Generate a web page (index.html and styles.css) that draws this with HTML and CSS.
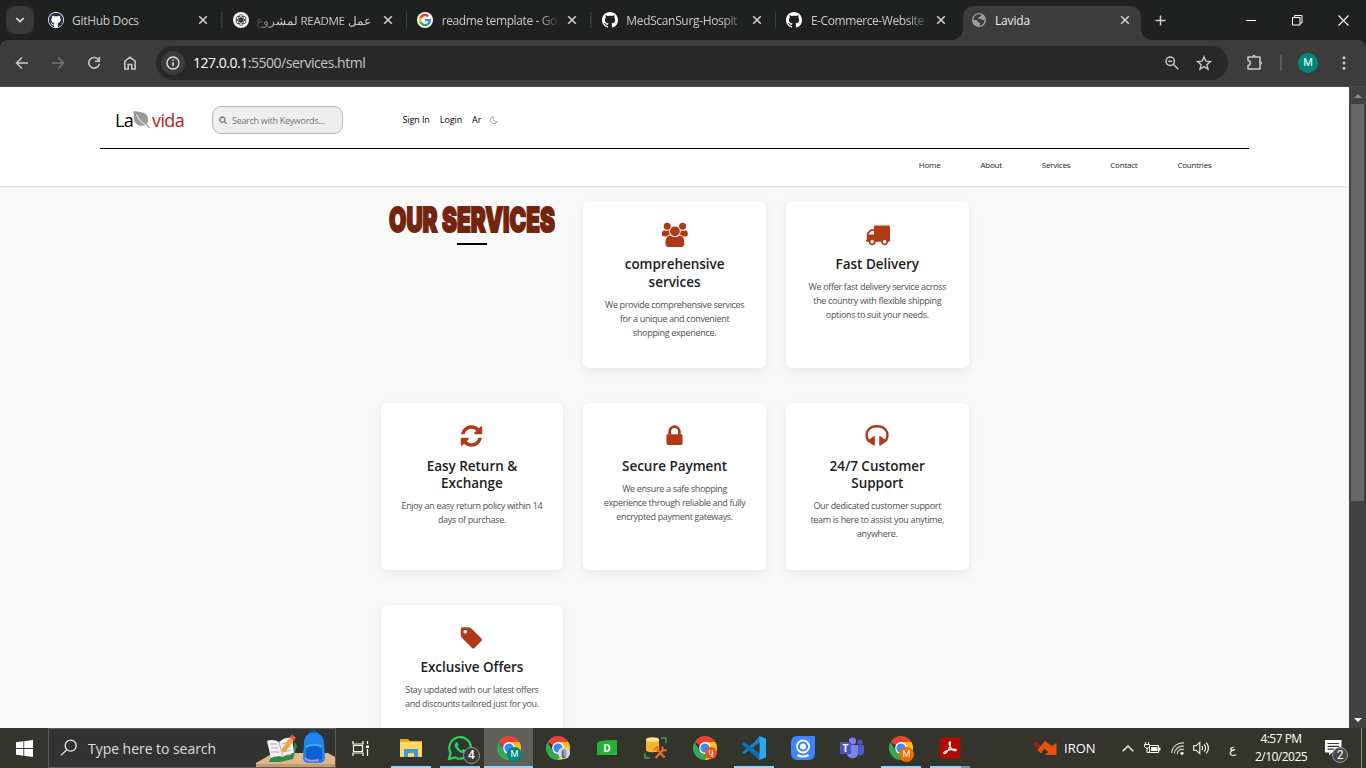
FILE: index.html
```html
<!DOCTYPE html>
<html lang="en">
<head>
<meta charset="utf-8">
<title>Lavida</title>
<link rel="stylesheet" href="styles.css">
</head>
<body>
<svg class="defs" aria-hidden="true">
  <symbol id="x" viewBox="0 0 10 10"><path d="M1.2 1.2l7.6 7.6M8.8 1.2L1.2 8.8" fill="none" stroke="currentColor" stroke-width="1.6"/></symbol>
  <symbol id="github" viewBox="0 0 16 16"><path fill="currentColor" d="M8 0C3.58 0 0 3.58 0 8c0 3.54 2.29 6.53 5.47 7.59.4.07.55-.17.55-.38 0-.19-.01-.82-.01-1.49-2.01.37-2.53-.49-2.69-.94-.09-.23-.48-.94-.82-1.13-.28-.15-.68-.52-.01-.53.63-.01 1.08.58 1.23.82.72 1.21 1.87.87 2.33.66.07-.52.28-.87.51-1.07-1.78-.2-3.64-.89-3.64-3.95 0-.87.31-1.59.82-2.15-.08-.2-.36-1.02.08-2.12 0 0 .67-.21 2.2.82.64-.18 1.32-.27 2-.27s1.36.09 2 .27c1.53-1.04 2.2-.82 2.2-.82.44 1.1.16 1.92.08 2.12.51.56.82 1.27.82 2.15 0 3.07-1.87 3.75-3.65 3.95.29.25.54.73.54 1.48 0 1.07-.01 1.93-.01 2.2 0 .21.15.46.55.38A8.01 8.01 0 0 0 16 8c0-4.42-3.58-8-8-8z"/></symbol>
  <symbol id="chrome" viewBox="0 0 24 24"><path fill="#ea4335" d="M12 12L1.6 6A12 12 0 0 1 22.4 6z"/><path fill="#fbc116" d="M12 12L12 6H22.4A12 12 0 0 1 12 24z"/><path fill="#34a853" d="M12 24A12 12 0 0 1 1.6 6L6.8 15 12 12l5.2 3z"/><circle cx="12" cy="12" r="5.9" fill="#fff"/><circle cx="12" cy="12" r="4.6" fill="#4285f4"/></symbol>
</svg>

<div class="tabstrip">
  <div class="tab-search"><svg width="10" height="6" viewBox="0 0 10 6"><path d="M1.3 1l3.7 3.6L8.700 1" fill="none" stroke="#e8e8e8" stroke-width="1.7"/></svg></div>
  <div class="tab"><span class="fav fav-docs"><svg width="16" height="16"><use href="#github"/></svg></span><span class="tab-title t1">GitHub Docs</span><svg class="close"><use href="#x"/></svg></div>
  <div class="tab"><svg class="fav" viewBox="0 0 16 16"><circle cx="8" cy="8" r="8" fill="#f4f4f4"/><g fill="none" stroke="#222" stroke-width=".7"><ellipse cx="8" cy="5.800" rx="2.300" ry="3.200"/><ellipse cx="8" cy="5.800" rx="2.300" ry="3.200" transform="rotate(60 8 8)"/><ellipse cx="8" cy="5.800" rx="2.300" ry="3.200" transform="rotate(120 8 8)"/><ellipse cx="8" cy="5.800" rx="2.300" ry="3.200" transform="rotate(180 8 8)"/><ellipse cx="8" cy="5.800" rx="2.300" ry="3.200" transform="rotate(240 8 8)"/><ellipse cx="8" cy="5.800" rx="2.300" ry="3.200" transform="rotate(300 8 8)"/></g></svg><span class="tab-title rtl" dir="rtl">عمل README لمشروع</span><svg class="close"><use href="#x"/></svg></div>
  <div class="tab"><svg class="fav" viewBox="0 0 64 64"><circle cx="32" cy="32" r="32" fill="#fff"/><g transform="translate(7 7) scale(1.04)"><path fill="#EA4335" d="M24 9.500c3.540 0 6.710 1.220 9.210 3.600l6.850-6.850C35.900 2.380 30.470 0 24 0 14.620 0 6.510 5.380 2.560 13.220l7.980 6.190C12.430 13.720 17.740 9.500 24 9.500z"/><path fill="#4285F4" d="M46.980 24.550c0-1.570-.15-3.090-.38-4.550H24v9.020h12.940c-.58 2.960-2.260 5.480-4.780 7.180l7.730 6c4.510-4.180 7.090-10.360 7.090-17.650z"/><path fill="#FBBC05" d="M10.530 28.590c-.48-1.450-.76-2.990-.76-4.590s.27-3.140.76-4.590l-7.980-6.190C.92 16.460 0 20.120 0 24s.92 7.540 2.560 10.780l7.970-6.190z"/><path fill="#34A853" d="M24 48c6.480 0 11.930-2.130 15.890-5.810l-7.730-6c-2.150 1.450-4.920 2.300-8.160 2.300-6.260 0-11.570-4.220-13.470-9.910l-7.980 6.190C6.510 42.620 14.620 48 24 48z"/></g></svg><span class="tab-title fade t3">readme template - Go</span><svg class="close"><use href="#x"/></svg></div>
  <div class="tab"><svg class="fav gh"><use href="#github"/></svg><span class="tab-title fade t4">MedScanSurg-Hospit</span><svg class="close"><use href="#x"/></svg></div>
  <div class="tab last"><svg class="fav gh"><use href="#github"/></svg><span class="tab-title fade t5">E-Commerce-Website</span><svg class="close"><use href="#x"/></svg></div>
  <div class="tab active"><svg class="fav globe" viewBox="0 0 14 14"><circle cx="7" cy="7" r="7" fill="#9aa0a6"/><path d="M5 1.600c1.800-.6 3.600-.3 5 .6-.6.500-1.100.4-1.600.8-.2 1.300-1 1.200-1.800 1.300-.2.900.4 1.300 1.400 1.200 1 .2 1.200.9 2 1.200 1.100.2 1.900-.1 2.500-.5.300 3.300-2 6-5 6.400.1-1 .9-1.300.8-2.200-.5-.9-1.300-.5-2-1C5.400 8.300 5.200 7.300 4 7H1.400C1.500 4.500 3 2.500 5 1.600z" fill="#3c3c3c"/><path d="M6.300 4.300c1 .4 2.400-.6 3.400.4.500.8 1.600.4 2.300 1-.8 1-2 1-2.800.4-.8-.8-2.300 0-2.900-.8zM1.600 7.200h2.200c1.400.4 1.600 1.700 2.700 2 .8.400.6 1.500-.2 2.900-2.800-.3-4.600-2.400-4.700-4.900z" fill="#9aa0a6"/></svg><span class="tab-title">Lavida</span><svg class="close"><use href="#x"/></svg></div>
  <svg class="newtab" viewBox="0 0 11 11"><path d="M5.500 .5v10M.5 5.500h10" stroke="#ccc" stroke-width="1.500"/></svg>
  <div class="winctl">
    <svg width="11" height="11"><path d="M0 5.500h10" stroke="#fff"/></svg>
    <svg width="11" height="11"><path d="M.5 2.500h7.500v7.500H.5zM2.500 2.500v-2h7.500v7.500h-2" fill="none" stroke="#fff"/></svg>
    <svg width="11" height="11"><path d="M.5 .5l10 10M10.500 .5l-10 10" stroke="#fff" stroke-width="1.100"/></svg>
  </div>
</div>

<div class="toolbar">
  <svg class="nav" viewBox="0 0 16 16"><path d="M14 8H3M8 2.500L2.500 8 8 13.500" fill="none" stroke="#c7c7c7" stroke-width="1.500"/></svg>
  <svg class="nav" viewBox="0 0 16 16"><path d="M2 8h11M8 2.500L13.500 8 8 13.500" fill="none" stroke="#757575" stroke-width="1.500"/></svg>
  <svg class="nav" viewBox="0 0 16 16"><path d="M12.700 5.200A5.300 5.300 0 1 0 13.300 8.800M13.300 2v4.300H9" fill="none" stroke="#c7c7c7" stroke-width="1.600"/></svg>
  <svg class="nav" viewBox="0 0 16 16"><path d="M2.800 14V6.200L8 2.200l5.200 4V14H9.800V9.500H6.200V14z" fill="none" stroke="#c7c7c7" stroke-width="1.600"/></svg>
  <div class="omnibox">
    <span class="info"><svg width="14" height="14" viewBox="0 0 14 14"><circle cx="7" cy="7" r="6" fill="none" stroke="#ddd" stroke-width="1.400"/><path d="M7 6.200v4M7 3.500v1.500" stroke="#ddd" stroke-width="1.500"/></svg></span>
    <span class="url"><b>127.0.0.1</b>:5500/services.html</span>
    <svg class="zoom" viewBox="0 0 14 14"><circle cx="5.200" cy="5.200" r="4.200" fill="none" stroke="#c7c7c7" stroke-width="1.500"/><path d="M3.300 5.200h3.800M8.300 8.300l5 5" stroke="#c7c7c7" stroke-width="1.500"/></svg>
    <svg class="star" viewBox="0 0 16 16"><path d="M8 1.800l1.800 4.400 4.700.4-3.600 3 1.100 4.600L8 11.700l-4 2.500 1.100-4.600-3.600-3 4.700-.4z" fill="none" stroke="#c7c7c7" stroke-width="1.400"/></svg>
  </div>
  <svg class="ext" viewBox="0 0 17 17"><path d="M2 3H14V15H2V11.500C5 11.300 5 6.700 2 6.500z" fill="none" stroke="#c7c7c7" stroke-width="1.600" stroke-linejoin="round"/><path d="M6 2.800c0-2.400 4-2.400 4 0zM14.300 7c2.300 0 2.300 4 0 4z" fill="#c7c7c7"/></svg>
  <span class="tb-sep"></span>
  <span class="avatar">M</span>
  <svg class="dots" viewBox="0 0 4 14"><g fill="#c7c7c7"><circle cx="2" cy="1.700" r="1.500"/><circle cx="2" cy="7" r="1.500"/><circle cx="2" cy="12.300" r="1.500"/></g></svg>
</div>

<div class="viewport">
  <div class="page">
    <header class="site-header">
      <div class="header-inner">
        <div class="top-row">
          <div class="logo"><span class="la">La</span><svg class="leaf" viewBox="0 0 20 20"><path d="M1 .8C7 1 17 1.500 16.800 9c0 2.700-.5 4.500-1.100 5.500L18.800 18.200l-.8.700-3.500-3.600C9 17.500 2 15 1.800 7.500 1.700 4.500 2.500 3 1 .8z" fill="#9a9898"/><path d="M5 4.500c1 4 4.500 8 9.500 10.300" fill="none" stroke="#fff" stroke-width="1"/></svg><span class="vida">vida</span></div>
          <div class="search"><svg width="8" height="8" viewBox="0 0 1792 1792"><path fill="#777" stroke="#777" stroke-width="60" d="M1216 832q0-185-131.500-316.500t-316.500-131.500-316.500 131.500-131.500 316.500 131.500 316.500 316.500 131.500 316.500-131.500 131.500-316.500zm512 832q0 52-38 90t-90 38q-54 0-90-38l-343-342q-179 124-399 124-143 0-273.500-55.500t-225-150-150-225-55.500-273.500 55.500-273.500 150-225 225-150 273.500-55.500 273.500 55.500 225 150 150 225 55.500 273.500q0 220-124 399l343 343q37 37 37 90z"/></svg><span>Search with Keywords...</span></div>
          <div class="account"><span class="signin">Sign In</span><span class="login">Login</span><span class="ar">Ar</span><svg width="8" height="8" viewBox="0 0 8 8"><path d="M3.300.5C1.500 1.200.5 2.500.5 4.200c0 2 1.500 3.300 3.400 3.300 1.600 0 2.800-.8 3.400-2C4.500 6 2.300 4 3.300.5z" fill="none" stroke="#999" stroke-width=".9"/></svg></div>
        </div>
        <nav class="menu"><span class="m1">Home</span><span class="m2">About</span><span class="m3">Services</span><span class="m4">Contact</span><span class="m5">Countries</span></nav>
      </div>
    </header>
    <main class="services">
      <div class="heading"><svg width="170" height="30"><text x="2" y="27" textLength="166" lengthAdjust="spacingAndGlyphs">OUR SERVICES</text></svg><span class="bar"></span></div>
      <article class="card"><svg class="ico" width="28" height="26" viewBox="0 0 28 26"><g fill="#b03a16"><circle cx="6.200" cy="4.300" r="3.500"/><circle cx="21.600" cy="4.300" r="3.500"/><path d="M8.200 8.200c-1.900 1-3.800.7-5.200 0C1.300 8.400 1 10.800 1 12.300c0 1.600 1 2.200 2.400 2.200h2.400c.8-1.100 1.900-1.800 3.300-2-.8-1.400-1.100-2.700-.9-4.300zM19.600 8.200c1.900 1 3.800.7 5.200 0 1.700.2 2 2.600 2 4.100 0 1.600-1 2.200-2.400 2.200H22c-.8-1.100-1.900-1.800-3.300-2 .8-1.400 1.100-2.700.9-4.300z"/><circle cx="13.900" cy="9.300" r="4.900"/><path d="M9.300 13.600c2.900 2.300 6.300 2.300 9.200 0 4 0 4.900 4.400 4.900 7.800 0 2.500-1.500 3.600-3.600 3.600H8c-2.100 0-3.600-1.100-3.600-3.600 0-3.400.9-7.800 4.900-7.800z"/></g></svg><h2>comprehensive<br>services</h2><p>We provide comprehensive services<br>for a unique and convenient<br>shopping experience.</p></article>
      <article class="card"><svg class="ico truck" width="25" height="25" viewBox="0 0 1792 1792"><path fill="#b03a16" d="M640 1408q0-52-38-90t-90-38-90 38-38 90 38 90 90 38 90-38 38-90zm-384-512h384v-256h-158q-13 0-22 9l-195 195q-9 9-9 22v30zm1280 512q0-52-38-90t-90-38-90 38-38 90 38 90 90 38 90-38 38-90zm256-1088v1024q0 15-4 26.500t-13.500 18.500-16.500 11.500-23.500 6-22.500 2-25.500 0-22.500-.5q0 106-75 181t-181 75-181-75-75-181h-384q0 106-75 181t-181 75-181-75-75-181h-64q-3 0-22.500.5t-25.500 0-22.500-2-23.500-6-16.500-11.500-13.500-18.500-4-26.500q0-26 19-45t45-19v-320q0-8-.5-35t0-38 2.500-34.500 6.500-37 14-30.500 22.500-30l198-198q19-19 50.500-32t58.500-13h160v-192q0-26 19-45t45-19h1024q26 0 45 19t19 45z"/></svg><h2>Fast Delivery</h2><p>We offer fast delivery service across<br>the country with flexible shipping<br>options to suit your needs.</p></article>
      <article class="card"><svg class="ico" width="25" height="25" viewBox="0 0 1792 1792"><path fill="#b03a16" d="M1639 1056q0 5-1 7-64 268-268 434.500t-478 166.500q-146 0-282.500-55t-243.500-157l-129 129q-19 19-45 19t-45-19-19-45v-448q0-26 19-45t45-19h448q26 0 45 19t19 45-19 45l-137 137q71 66 161 102t187 36q134 0 250-65t186-179q11-17 53-117 8-23 30-23h192q13 0 22.500 9.500t9.500 22.500zm25-800v448q0 26-19 45t-45 19h-448q-26 0-45-19t-19-45 19-45l138-138q-148-137-349-137-134 0-250 65t-186 179q-11 17-53 117-8 23-30 23h-199q-13 0-22.500-9.500t-9.500-22.500v-7q65-268 270-434.500t480-166.500q146 0 284 55.500t245 156.500l130-129q19-19 45-19t45 19 19 45z"/></svg><h2>Easy Return &amp;<br>Exchange</h2><p>Enjoy an easy return policy within 14<br>days of purchase.</p></article>
      <article class="card"><svg class="ico lock" width="25" height="25" viewBox="0 0 1792 1792"><path fill="#b03a16" d="M640 768h512v-192q0-106-75-181t-181-75-181 75-75 181v192zm832 96v576q0 40-28 68t-68 28h-960q-40 0-68-28t-28-68v-576q0-40 28-68t68-28h32v-192q0-184 132-316t316-132 316 132 132 316v192h32q40 0 68 28t28 68z"/></svg><h2>Secure Payment</h2><p>We ensure a safe shopping<br>experience through reliable and fully<br>encrypted payment gateways.</p></article>
      <article class="card"><svg class="ico" width="24" height="26" viewBox="0 0 24 26"><path d="M3 17.500C-1.200 9 4.500 3.200 12 3.200S25.200 9 21 17.500" fill="none" stroke="#b03a16" stroke-width="2.400"/><path d="M9.800 13.200v9.200h-1.300L4.800 20 1.600 18l2.300-1.700c1.500-.2 2-.6 2.600-1.500L8.500 13.200zM14.200 13.200v9.200h1.300l3.700-2.400 3.200-2-2.300-1.700c-1.500-.2-2-.6-2.600-1.500L15.500 13.200z" fill="#b03a16"/></svg><h2>24/7 Customer<br>Support</h2><p>Our dedicated customer support<br>team is here to assist you anytime,<br>anywhere.</p></article>
      <article class="card"><svg class="ico" width="25" height="25" viewBox="0 0 1792 1792"><path fill="#b03a16" d="M576 448q0-53-37.500-90.500t-90.500-37.500-90.500 37.500-37.500 90.500 37.500 90.500 90.500 37.500 90.500-37.500 37.500-90.500zm1067 576q0 53-37 90l-491 492q-39 37-91 37-53 0-90-37l-715-716q-38-37-64.500-101t-26.500-117v-416q0-52 38-90t90-38h416q53 0 117 26.500t102 64.500l715 714q37 39 37 91z"/></svg><h2>Exclusive Offers</h2><p>Stay updated with our latest offers<br>and discounts tailored just for you.</p></article>
    </main>
  </div>
  <div class="scrollbar"><svg viewBox="0 0 8 4"><path d="M0 4l4-4 4 4z" fill="#8b8b8b"/></svg><span class="thumb"></span><svg class="down" viewBox="0 0 8 4"><path d="M0 0l4 4 4-4z" fill="#fff"/></svg></div>
</div>

<footer class="taskbar">
  <div class="start"><svg width="17" height="17" viewBox="0 0 17 17"><path fill="#fff" d="M0 2.300L7.400 1.300V8.100H0zM8.200 1.200L17 0V8.100H8.200zM0 8.900h7.400v6.800L0 14.700zM8.200 8.900H17V17l-8.800-1.200z"/></svg></div>
  <div class="tb-search">
    <svg width="18" height="18" viewBox="0 0 18 18"><circle cx="10.700" cy="6.700" r="5.500" fill="none" stroke="#eee" stroke-width="1.300"/><path d="M6.800 10.600L1 16.400" stroke="#eee" stroke-width="1.300"/></svg>
    <span>Type here to search</span>
    <svg class="art" width="80" height="38" viewBox="0 0 80 38"><path d="M1 34L18 24H73L80 28v10H1z" fill="#dfb98c"/><path d="M1 35h79v3H1z" fill="#c79a6b"/><path d="M14 33l2-5 20-2 4-13 2 4-4 13-13 3z" fill="#2c8a4b"/><path d="M12 12c4-2 9-1 12 1 4-4 9-5 13-4l2 15c-4 0-8 1-11 4-4-2-8-1-12 1z" fill="#f4f2f8"/><path d="M24 13l4 15M15 15l7 0M16 19l7 0M16 23l8 0M27 15l8-2M28 19l8-2M29 23l7-2" stroke="#b0a8c0" stroke-width="1" fill="none"/><path d="M27 20l8-12 4 3-8 11-5 2z" fill="#f3a33c"/><path d="M35 8l2-2.500 4 3-2 3z" fill="#e5525c"/><path d="M54 6c0-5 9-5 9 0" fill="none" stroke="#1454b5" stroke-width="2"/><path d="M49 14c0-14 20-14 20 0l1 14c0 6-3 6-11 6s-11 0-11-6z" fill="#1c85f2"/><path d="M51 20c3-4 13-4 16 0v10c0 3-16 3-16 0z" fill="#0c5fcc"/><path d="M51 18c3-3 13-3 16 0" fill="none" stroke="#4ea6ff" stroke-width="1.500"/><path d="M50 29c3 4 9 3 14 2" fill="none" stroke="#c58cf5" stroke-width="1.800"/></svg>
  </div>
  <div class="slot view"><svg width="18" height="17" viewBox="0 0 18 17"><path d="M1 1v3h10V1M1 16v-3h10v3M1.500 5.500h9v6h-9zM15.500 1v3M15.500 9v7" fill="none" stroke="#fff" stroke-width="1.200"/><path d="M14 5.500h3v2.500h-3z" fill="#fff"/></svg></div>
  <div class="slot open"><svg width="22" height="20" viewBox="0 0 22 20"><path d="M0 1h8l2 2h12v15H0z" fill="#e8a317"/><path d="M0 4h22v15H0z" fill="#ffd867"/><path d="M4 11h14v8h-4v-4H8v4H4z" fill="#3e9be0"/></svg></div>
  <div class="slot open"><svg width="26" height="26" viewBox="0 0 26 26"><path d="M2 24l1.600-6A10.800 10.800 0 1 1 8 22.400z" fill="none" stroke="#25d366" stroke-width="2.200"/><path d="M8.500 8c1-1.500 2-1 2.300 0l.8 2-1 1.400c1 2 2.300 3.200 4.200 4l1.500-1.500 2.500 1.300c.3 2-2 3-3.600 2.700-4-1-8-5.500-7.500-8z" fill="#25d366"/></svg><span class="badge b4">4</span></div>
  <div class="slot focus"><svg width="24" height="24"><use href="#chrome"/></svg><span class="badge bm">M</span></div>
  <div class="slot"><svg width="24" height="24"><use href="#chrome"/></svg><span class="badge bp"><svg width="12" height="12"><path d="M4 2l4 0 1 4-1 5-4 0-1-4z" fill="#9aa7ae"/><path d="M4 3l2 2-1 3 3 3H4z" fill="#5d6a70"/></svg></span></div>
  <div class="slot"><svg width="20" height="16" viewBox="0 0 20 16"><path d="M3 1l17-1v15H3z" fill="#29c440"/><path d="M0 3l3-2 17-1v11l-4 4H0z" fill="#24b238"/><text x="10" y="12" class="dl">D</text></svg></div>
  <div class="slot"><svg width="24" height="24" viewBox="0 0 24 24"><path d="M17 2h5v5M1 17v5h5" fill="none" stroke="#43a047" stroke-width="1.500"/><path d="M2 3v11c0 3 13 3 13 0V3z" fill="#f4b62d"/><ellipse cx="8.500" cy="3.500" rx="6.500" ry="2.300" fill="#ffe494"/><path d="M11.500 22l8-8.500M13 13l7.500 8.500" stroke="#e8731a" stroke-width="2.200"/><path d="M9.500 14.500l3.500-3.500 2.500 2M18 10.500l1 3.500 3.500.5" stroke="#e8731a" stroke-width="2" fill="none"/></svg></div>
  <div class="slot"><svg width="24" height="24"><use href="#chrome"/></svg><span class="badge br">ų</span></div>
  <div class="slot open"><svg width="24" height="24" viewBox="0 0 24 24"><path d="M17.500 0L24 2.800v18.400L17.500 24 7 14.300 2.200 18 0 16.800 13.500 5z" fill="#1686d0"/><path d="M0 7.200L2.200 6 17.500 18V24L0 8.500z" fill="#0b6fb8"/><path d="M17.500 0L24 2.800v18.400L17.500 24z" fill="#2ba8f2"/><path d="M17.500 6.500v11L10.300 12z" fill="#33342b"/></svg></div>
  <div class="slot"><svg width="24" height="24" viewBox="0 0 24 24"><path d="M6 0h18v18a6 6 0 0 1-6 6H6a6 6 0 0 1-6-6V6a6 6 0 0 1 6-6z" fill="#3f83fa"/><circle cx="12" cy="10.500" r="6" fill="none" stroke="#fff" stroke-width="1.800"/><circle cx="12" cy="10.500" r="3" fill="#fff"/><path d="M6.500 19c3 2 8 2 11 0" stroke="#fff" stroke-width="2.200" fill="none"/></svg></div>
  <div class="slot"><svg width="24" height="22" viewBox="0 0 24 22"><circle cx="12.500" cy="4" r="3.600" fill="#7b83eb"/><circle cx="20" cy="5" r="2.600" fill="#5059c9"/><path d="M16 8h8v7c0 3-3 4-6 3z" fill="#5059c9"/><path d="M7 8h11v8c0 7-11 7-11 0z" fill="#7b83eb"/><path d="M0 5h11v12H0z" fill="#4b53bc"/><text x="5.500" y="14.500" class="dl">T</text></svg></div>
  <div class="slot open"><svg width="24" height="24"><use href="#chrome"/></svg><span class="badge bo">M</span></div>
  <div class="slot open pdf"><svg width="22" height="22" viewBox="0 0 22 22"><rect x=".5" y=".5" width="21" height="21" rx="3" fill="#b30b00"/><path d="M5 16.500c-1.500-1.500 5-4 10-4.300 4 0 2 2.800-1 .8C11.500 11.500 9.500 8 10.200 5.500c1.300-2.300 1.800 1.500.3 5C9 14 6.500 17.500 5 16.500z" fill="none" stroke="#fff" stroke-width="1.200"/></svg></div>
  <div class="tray">
    <svg class="iron" width="24" height="14" viewBox="0 0 24 14"><path d="M0 3L3.500 0 8 5 4.500 9z" fill="#8e2416"/><path d="M4.500 9L12 0l7 5 4.500-3v12H12l3-3-3.500-3.500L8 12.500z" fill="#e8520c"/></svg>
    <span class="irontext">IRON</span>
    <svg class="chev" width="12" height="7" viewBox="0 0 12 7"><path d="M.7 6.300L6 1l5.300 5.300" fill="none" stroke="#fff" stroke-width="1.300"/></svg>
    <svg class="bat" width="17" height="13" viewBox="0 0 17 13"><path d="M5.500 3.500h9v7h-9zM1.500 0v2.500M4.500 0v2.500M.5 2.500h5v2L3 6.500.5 4.500zM3 6v4.500h2.500" fill="none" stroke="#fff"/><path d="M7 5h6.500v4H7zM15 5.500h1.500v3H15z" fill="#fff"/></svg>
    <svg class="wifi" width="14" height="13" viewBox="0 0 14 13"><g fill="none" stroke="#ddd" stroke-width="1.100"><path d="M.6 11A11 11 0 0 1 13 1"/><path d="M3.400 11.500A8 8 0 0 1 13 4.300"/><path d="M6.200 12A5 5 0 0 1 13 7.500"/></g><circle cx="11" cy="11.300" r="1.600" fill="#fff"/></svg>
    <svg class="vol" width="17" height="14" viewBox="0 0 17 14"><g fill="none" stroke="#fff" stroke-width="1.100"><path d="M.6 4.800h2.600L6.800 1.300v11.400L3.200 9.200H.6zM8.800 5c1 1.200 1 2.800 0 4M11 3.300c2 2.200 2 5.200 0 7.400M13.200 1.600c3 3 3 7.800 0 10.800"/></g></svg>
    <span class="lang">ع</span>
    <span class="clock"><span class="time">4:57 PM</span><span class="date">2/10/2025</span></span>
    <span class="note"><svg width="17" height="16" viewBox="0 0 17 16"><path d="M0 0h16.500v12.500H7L4 15.500v-3H0z" fill="#fff"/><path d="M2.500 3.500H14M2.500 6.300H14M2.500 9.100H9" stroke="#34352b" stroke-width="1.200"/></svg><span class="badge b2">2</span></span>
    <span class="desk"></span>
  </div>
</footer>
</body>
</html>
```
FILE: styles.css
```css
* { box-sizing: border-box; }
body { margin: 0; width: 1366px; height: 768px; overflow: hidden; display: flex; flex-direction: column; font-family: "Open Sans", "Noto Sans", sans-serif; background: #1f2120; white-space: nowrap; }
svg { display: block; flex: none; }
.defs { position: absolute; width: 0; height: 0; }

/* browser tabs */
.tabstrip { height: 40px; flex: none; display: flex; align-items: center; background: #1f2120; }
.tab-search { width: 28px; height: 28px; margin: 0 4px 0 6px; border-radius: 9px; background: #3a3a3a; display: flex; align-items: center; justify-content: center; }
.tab { width: 184.6px; height: 40px; flex: none; display: flex; align-items: center; padding: 0 14.5px 0 10px; background: linear-gradient(#3f4140, #3f4140) 100% 50% / 1.5px 16px no-repeat; }
.tab.last { background: none; }
.fav { width: 16px; height: 16px; flex: none; margin-right: 8px; }
.fav-docs { border-radius: 50%; background: #fff; color: #24304a; }
.fav-docs svg { transform: scale(.92); }
.gh { color: #fff; }
.tab-title { width: 116px; padding-top: 1px; font-size: 12px; line-height: 20px; color: #c9cac9; letter-spacing: -.3px; }
.tab-title.rtl { width: 114px; font-size: 11.5px; letter-spacing: -.3px; }
.t3, .t4, .t5 { padding-left: .5px; }
.t3 { letter-spacing: -.38px; }
.t4 { letter-spacing: -.34px; }
.t5 { letter-spacing: -.42px; }
.fade { -webkit-mask-image: linear-gradient(90deg, #000 84%, rgba(0,0,0,.15) 100%); mask-image: linear-gradient(90deg, #000 84%, rgba(0,0,0,.15) 100%); }
.rtl { -webkit-mask-image: linear-gradient(270deg, #000 82%, rgba(0,0,0,.2) 100%); mask-image: linear-gradient(270deg, #000 82%, rgba(0,0,0,.2) 100%); }
.close { width: 10px; height: 10px; margin-left: auto; color: #d0d0d0; }
.active { position: relative; width: 178px; height: 34px; align-self: flex-end; background: #3c3c3c; border-radius: 10px 10px 0 0; padding: 0 11px 6px 9px; margin-left: 2px; }
.active::before, .active::after { content: ""; position: absolute; bottom: 0; width: 10px; height: 10px; }
.active::before { left: -10px; background: radial-gradient(circle at 0 0, transparent 9.5px, #3c3c3c 10px); }
.active::after { right: -10px; background: radial-gradient(circle at 100% 0, transparent 9.5px, #3c3c3c 10px); }
.active .tab-title { color: #eee; letter-spacing: -.15px; }
.globe { width: 14px; height: 14px; margin: 0 9px 0 0; }
.newtab { width: 11px; height: 11px; margin-left: 14px; }
.winctl { display: flex; gap: 35px; margin-left: auto; margin-right: 17px; }

/* toolbar */
.toolbar { height: 47px; flex: none; display: flex; align-items: center; padding: 0 0 1px 14px; background: #3c3c3c; border-bottom: 1px solid #4a4a4a; border-radius: 8px 8px 0 0; }
.nav { width: 16px; height: 16px; margin-right: 20px; }
.omnibox { width: 1072px; height: 34px; margin-left: -2px; border-radius: 17px; background: #282828; display: flex; align-items: center; padding: 0 16px 0 5px; }
.info { width: 24px; height: 24px; border-radius: 50%; background: #3c3c3c; display: flex; align-items: center; justify-content: center; margin-right: 8px; }
.url { font-size: 14px; color: #c7c7c7; letter-spacing: -.48px; }
.url b { font-weight: 400; color: #fff; }
.zoom { width: 14px; height: 14px; margin-left: auto; margin-right: 17px; }
.star { width: 16px; height: 16px; }
.ext { width: 17px; height: 17px; margin-left: 18px; }
.tb-sep { width: 2px; height: 16px; margin-left: 17px; background: #5a5a5a; }
.avatar { width: 20px; height: 20px; margin-left: 16px; border-radius: 50%; background: #00897b; color: #fff; font: 11px/20px Roboto, sans-serif; text-align: center; }
.dots { width: 4px; height: 14px; margin-left: 24px; }

/* page */
.viewport { flex: 1; min-height: 0; display: flex; overflow: hidden; background: #f9f9f9; }
.page { width: 1349px; height: 641px; overflow: hidden; }
.site-header { position: relative; height: 99px; background: #fff; box-shadow: 0 1px 2px rgba(0,0,0,.13); }
.header-inner { width: 1149px; margin-left: 100px; }
.top-row { height: 62px; display: flex; align-items: center; border-bottom: 1px solid #000; padding: 5px 0 0 15px; }
.logo { width: 97px; display: flex; align-items: center; font-size: 18px; line-height: 24px; }
.la { width: 17px; color: #000; letter-spacing: -.7px; }
.vida { color: #c4161c; letter-spacing: -.6px; }
.leaf { width: 19px; height: 20px; margin-right: 1px; }
.search { width: 131px; height: 28px; border: 1px solid #b5b5b5; border-radius: 9px; background: #efefef; display: flex; align-items: center; padding-left: 6px; gap: 5px; color: #757575; font-size: 9px; letter-spacing: -.29px; }
.account { display: flex; align-items: center; margin-left: 59.5px; padding-bottom: 2px; color: #000; font-size: 9px; gap: 10px; letter-spacing: -.1px; }
.account svg { margin-top: 2px; margin-left: -1px; }
.menu { height: 33px; display: flex; align-items: center; justify-content: flex-end; gap: 40px; padding: 0 37.5px 2px 0; font-size: 8px; color: #222; letter-spacing: -.23px; }
.services { width: 588px; margin: 15.6px 0 0 380.6px; display: grid; grid-template-columns: repeat(3, 1fr); grid-auto-rows: 166.5px; gap: 35px 20px; }
.heading { display: flex; flex-direction: column; align-items: center; padding-top: 3.4px; }
.heading text { font: 900 33.5px Inter, sans-serif; fill: #74230c; stroke: #74230c; stroke-width: 1.9px; }
.bar { width: 30px; height: 2px; margin-top: 8px; background: #000; }
.card { background: #fff; border-radius: 6px; box-shadow: 0 3px 10px rgba(0,0,0,.08); display: flex; flex-direction: column; align-items: center; padding-top: 20px; text-align: center; }
.card .ico { height: 26px; }
.card .truck { height: 25px; margin-bottom: 1px; }
.card .lock { margin-top: -.5px; margin-bottom: .5px; }
.card h2 { margin: 8.9px 0 0; font-size: 13.5px; line-height: 17.5px; font-weight: 600; color: #212121; letter-spacing: -.03px; }
.card p { margin: 6.1px 0 0; font-size: 9px; line-height: 14px; color: #505050; letter-spacing: -.33px; }
.scrollbar { width: 17px; height: 641px; background: #424242; display: flex; flex-direction: column; align-items: center; padding: 7px 0 6px; }
.scrollbar svg { width: 8px; height: 4px; }
.thumb { width: 13px; height: 397px; margin-top: 6px; background: #686868; }
.scrollbar .down { margin-top: auto; }

/* taskbar */
.taskbar { height: 40px; flex: none; display: flex; background: #33342b; color: #fff; }
.start { width: 48px; display: flex; align-items: center; justify-content: center; }
.tb-search { width: 288px; background: #323232; border: 1px solid #5b5b58; display: flex; align-items: center; padding-left: 11px; font-size: 14px; color: #ddd; letter-spacing: -.04px; }
.tb-search span { margin-left: 10px; }
.art { margin-left: auto; }
.slot { position: relative; width: 49px; flex: none; display: flex; align-items: center; justify-content: center; }
.slot.view { width: 49px; margin-right: 1px; }
.open::after, .focus::after { content: ""; position: absolute; left: 4.500px; right: 4.500px; bottom: 0; height: 2px; background: #9ad0f5; }
.focus { background: #5f605a; }
.focus::after { left: 0; right: 0; }
.pdf::after { background: linear-gradient(90deg, #9ad0f5 31px, #6f93a8 31px); }
.dl { font: 700 10px "Open Sans", sans-serif; fill: #fff; text-anchor: middle; }
.badge { position: absolute; border-radius: 50%; text-align: center; font-family: Roboto, sans-serif; color: #fff; }
.b4 { left: 28px; top: 19px; width: 17px; height: 17px; background: #3a3b38; border: 1px solid #999; font-size: 12px; line-height: 15px; font-weight: 500; }
.bm, .bp, .br, .bo { left: 23px; top: 19px; width: 15px; height: 15px; font-size: 9px; line-height: 15px; }
.bm { background: #00897b; }
.bp { background: #d5dde2; width: 12px; height: 12px; left: 25px; overflow: hidden; }
.br { background: #f4511e; width: 12px; height: 12px; left: 25px; line-height: 10px; }
.bo { background: #ef6c00; }
.tray { margin-left: auto; display: flex; align-items: center; }
.irontext { margin-left: 7px; width: 33px; font-size: 13px; letter-spacing: 0; }
.chev { margin-left: 25px; }
.bat { margin-left: 10px; }
.wifi { margin-left: 10px; }
.vol { margin-left: 8px; }
.lang { width: 10px; margin-left: 17px; font-size: 12px; text-align: center; }
.clock { width: 60px; margin-left: 14px; display: flex; flex-direction: column; align-items: center; font-size: 12px; line-height: 18px; letter-spacing: -.52px; }
.note { position: relative; margin-left: 14px; }
.b2 { left: 7px; top: 7px; width: 16px; height: 16px; background: #45464a; border: 1px solid #999; font-size: 12px; line-height: 14px; }
.desk { width: 1px; height: 40px; margin-left: 19px; margin-right: 4px; background: #8a8a84; }
```
